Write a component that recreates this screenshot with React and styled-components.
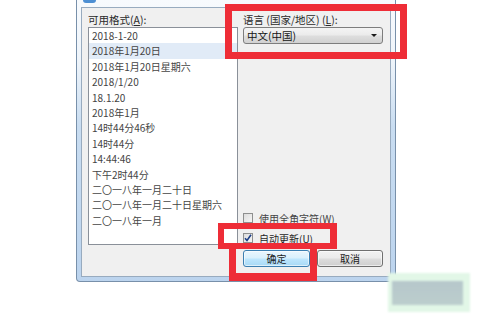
import React from "react";
import styled, { createGlobalStyle } from "styled-components";

const Global = createGlobalStyle`
  html, body { margin: 0; padding: 0; background: #ffffff; }
  * { box-sizing: border-box; }
  body { font-family: "Noto Sans CJK SC", "Noto Sans", sans-serif; }
`;

const Page = styled.div`
  position: relative;
  width: 500px;
  height: 318px;
  overflow: hidden;
  padding-left: 76px;
  background: #ffffff;
`;

const Window = styled.div`
  width: 320px;
  height: 282px;
  border: 1px solid #7890aa;
  border-top: none;
  border-radius: 0 0 4px 4px;
  padding: 0 4px 4px 4px;
  background: linear-gradient(
    180deg,
    #f7fafd 0%,
    #eef4fa 22%,
    #c9ddf1 45%,
    #bcd4ee 100%
  );
  display: flex;
  flex-direction: column;
`;

const TitleBar = styled.div`
  height: 7px;
  display: flex;
  align-items: flex-start;
  padding-left: 2px;
`;

const TitleIcon = styled.span`
  width: 13px;
  height: 3px;
  border-radius: 0 0 3px 3px;
  background: #4d8fd3;
`;

const Client = styled.div`
  flex: 1;
  background: #f0f0f0;
  border: 1px solid #98abbf;
  padding: 5px 7px 9px 6px;
  display: grid;
  grid-template-columns: 150px 140px;
  grid-template-rows: 232px 17px;
  column-gap: 5px;
  row-gap: 5px;
  color: #262626;
  font-size: 10px;
`;

const Column = styled.div`
  display: flex;
  flex-direction: column;
  min-height: 0;
`;

const FieldLabel = styled.div`
  height: 14px;
  line-height: 14px;
  font-size: 10.5px;
  white-space: nowrap;
  color: #2a2a2a;
`;

const ListBox = styled.div`
  flex: 1;
  background: #ffffff;
  border: 1px solid #8a9099;
  display: flex;
  flex-direction: column;
  overflow: hidden;
`;

const ListItem = styled.div`
  height: 15.4px;
  line-height: 15.4px;
  padding-left: 3px;
  white-space: nowrap;
  color: #444444;
  background: ${(p) => (p.$selected ? "#e1ebf7" : "transparent")};
`;

const Select = styled.div`
  height: 17px;
  border: 1px solid #7d7d7d;
  border-radius: 3px;
  background: linear-gradient(180deg, #f4f4f4 0%, #ebebeb 48%, #dedede 52%, #d1d1d1 100%);
  display: flex;
  align-items: center;
  justify-content: space-between;
  padding: 0 5px 0 3px;
  font-size: 10.5px;
  color: #141414;
`;

const Arrow = styled.span`
  width: 0;
  height: 0;
  border-left: 3px solid transparent;
  border-right: 3px solid transparent;
  border-top: 3px solid #1a1a1a;
`;

const CheckGroup = styled.div`
  margin-top: auto;
  display: flex;
  flex-direction: column;
  gap: 6px;
`;

const CheckRow = styled.div`
  height: 14px;
  display: flex;
  align-items: center;
  gap: 6px;
  white-space: nowrap;
  color: ${(p) => (p.$dim ? "#444444" : "#1f1f1f")};
`;

const Box = styled.span`
  width: 10px;
  height: 10px;
  border: 1px solid #8e8f8f;
  background: linear-gradient(135deg, #dcdcdc 0%, #f6f6f6 100%);
  display: flex;
  align-items: center;
  justify-content: center;
  flex: none;
`;

const ButtonRow = styled.div`
  grid-column: 2;
  display: flex;
  gap: 7px;
`;

const Button = styled.div`
  width: ${(p) => p.$w}px;
  height: 17px;
  border-radius: 3px;
  border: 1px solid ${(p) => (p.$primary ? "#3c7fb1" : "#707070")};
  background: ${(p) =>
    p.$primary
      ? "linear-gradient(180deg, #eaf6fd 0%, #d9f0fc 48%, #bee6fd 52%, #a7d9f5 100%)"
      : "linear-gradient(180deg, #f2f2f2 0%, #ebebeb 48%, #dddddd 52%, #cfcfcf 100%)"};
  display: flex;
  align-items: center;
  justify-content: center;
  font-size: 10px;
  color: #1a1a1a;
  box-shadow: inset 0 0 0 1px rgba(255, 255, 255, 0.6);
`;

const Highlight = styled.div`
  position: absolute;
  left: ${(p) => p.$x}px;
  top: ${(p) => p.$y}px;
  width: ${(p) => p.$w}px;
  height: ${(p) => p.$h}px;
  border-style: solid;
  border-color: #ee2d37;
  border-width: ${(p) => p.$b};
`;

const Glow = styled.div`
  position: absolute;
  left: 388px;
  top: 273px;
  width: 82px;
  height: 39px;
  background: #e2f7e7;
  padding: 8px 7px 7px 4px;
  filter: blur(0.8px);
`;

const GlowInner = styled.div`
  width: 100%;
  height: 100%;
  background: linear-gradient(180deg, #b6c7cb 0%, #bccecd 100%);
  clip-path: polygon(0 0, 100% 0, 100% 100%, 92% 100%, 0 100%);
`;

const formats = [
  "2018-1-20",
  "2018年1月20日",
  "2018年1月20日星期六",
  "2018/1/20",
  "18.1.20",
  "2018年1月",
  "14时44分46秒",
  "14时44分",
  "14:44:46",
  "下午2时44分",
  "二〇一八年一月二十日",
  "二〇一八年一月二十日星期六",
  "二〇一八年一月",
];

export default function App() {
  return (
    <>
      <Global />
      <Page>
        <Window>
          <TitleBar>
            <TitleIcon />
          </TitleBar>
          <Client>
            <Column>
              <FieldLabel>
                可用格式(<u>A</u>):
              </FieldLabel>
              <ListBox>
                {formats.map((f, i) => (
                  <ListItem key={f} $selected={i === 1}>
                    {f}
                  </ListItem>
                ))}
              </ListBox>
            </Column>
            <Column>
              <FieldLabel>
                语言 (国家/地区) (<u>L</u>):
              </FieldLabel>
              <Select>
                <span>中文(中国)</span>
                <Arrow />
              </Select>
              <CheckGroup>
                <CheckRow $dim>
                  <Box />
                  <span>
                    使用全角字符(<u>W</u>)
                  </span>
                </CheckRow>
                <CheckRow>
                  <Box>
                    <svg width="8" height="8" viewBox="0 0 8 8">
                      <path
                        d="M1 4.2 L3 6.5 L7 0.8"
                        fill="none"
                        stroke="#1d3f86"
                        strokeWidth="1.6"
                      />
                    </svg>
                  </Box>
                  <span>
                    自动更新(<u>U</u>)
                  </span>
                </CheckRow>
              </CheckGroup>
            </Column>
            <ButtonRow>
              <Button $primary $w={67}>
                确定
              </Button>
              <Button $w={66}>取消</Button>
            </ButtonRow>
          </Client>
        </Window>
        <Highlight $x={225} $y={4} $w={182} $h={55} $b="7px" />
        <Highlight $x={218} $y={223} $w={119} $h={26} $b="6px 7px 6px 6px" />
        <Highlight $x={229} $y={243} $w={88} $h={38} $b="6px 7px 8px 7px" />
        <Glow>
          <GlowInner />
        </Glow>
      </Page>
    </>
  );
}
